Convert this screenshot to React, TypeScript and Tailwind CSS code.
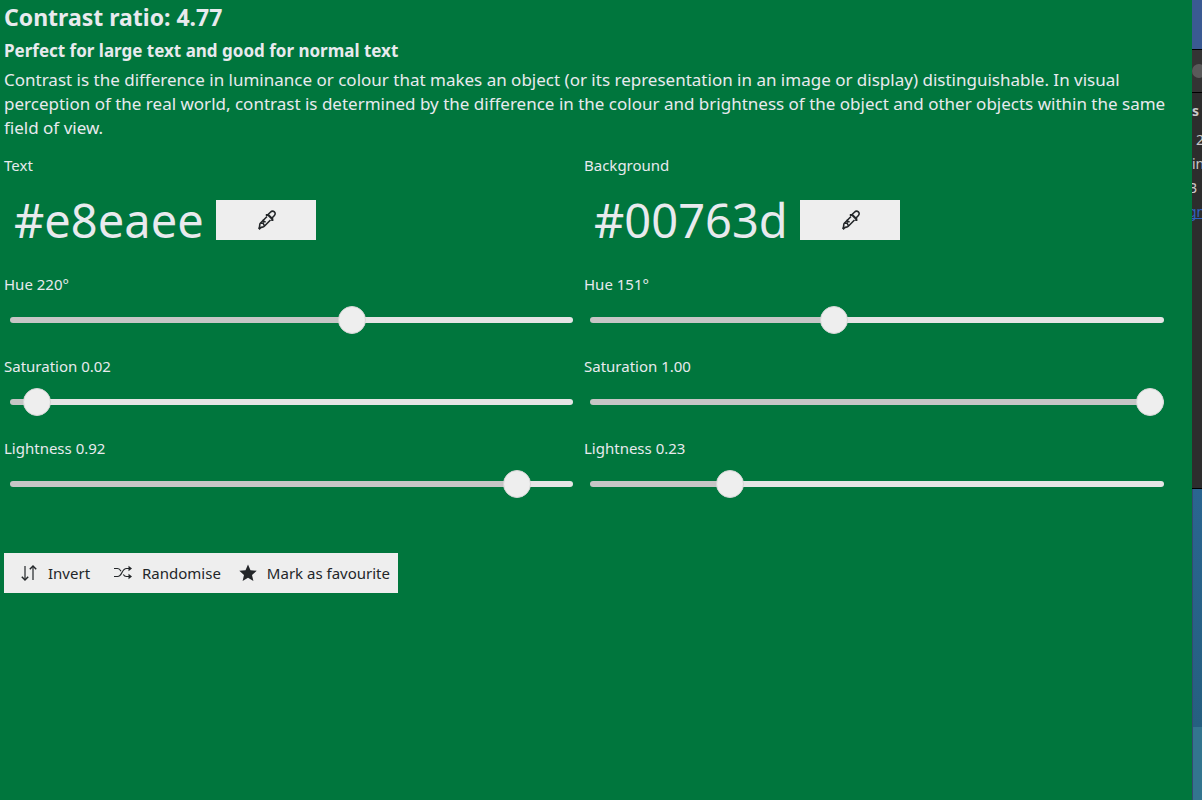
import { useState } from "react";
import type { CSSProperties, ReactNode } from "react";

function PickerIcon() {
  return (
    <svg width="22" height="22" viewBox="-1 0 22 22" fill="none" stroke="#232629" strokeWidth="1.6" aria-hidden="true">
      <path d="M11.800 5.800 14.400 3.200c1.200-1.200 2.900-1.300 4-.3s1 2.700-.2 3.900L15.500 9.500" />
      <path d="M9.800 6h2.500l4 4v2" strokeWidth="2.200" />
      <path d="M11 7.500 7.800 10.700M14.500 11 8.300 17.200c-1 1-2.300.8-3.300 1.300L3 20.400M7.800 10.700 4.300 14.200c-1 1-.3 2.500-.8 3.600L2.800 20" />
      <path d="M4.500 14.200h2.600l1.400 2.600M7.500 10.500v2.200h2.200" />
    </svg>
  );
}

function InvertIcon() {
  return (
    <svg width="18" height="18" viewBox="0 0 18 18" fill="none" stroke="#232629" aria-hidden="true">
      <path d="M5 2v14M13 2v14" strokeWidth="2" strokeOpacity=".6" />
      <path d="M1.800 12.800 5 16l3.200-3.200M9.800 5.200 13 2l3.200 3.200" strokeWidth="1.500" />
    </svg>
  );
}

function ShuffleIcon() {
  return (
    <svg width="18" height="18" viewBox="0 0 18 18" fill="none" stroke="#232629" strokeWidth="1.200" aria-hidden="true">
      <path d="M0 4.500h3.500c2 0 2.700 1.300 3.500 2.800M9.300 10.500c.8 1.300 1.500 2 3 2H16M0 12.500h3.500c5 0 4-8 9-8H16" />
      <path d="M14.500 1.700 18 4.500l-3.500 2.800zM14.500 9.700l3.500 2.800-3.500 2.800z" fill="#232629" stroke="none" />
    </svg>
  );
}

function StarIcon() {
  return (
    <svg width="18" height="18" viewBox="0 0 18 18" fill="#232629" aria-hidden="true">
      <path d="m9 .5 2.500 5.700 6.200.6-4.700 4.100 1.400 6.100L9 13.800 3.600 17 5 10.900.3 6.800l6.200-.6z" />
    </svg>
  );
}

type SliderProps = { id: string; label: string; max: number; initial: number; suffix?: string; digits: number };

function Slider({ id, label, max, initial, suffix = "", digits }: SliderProps) {
  const [value, setValue] = useState(initial);
  const ratio = value / max;
  const fill = { "--fill": `calc(14px + (100% - 28px) * ${ratio})` } as CSSProperties;
  return (
    <div className="flex h-[82px] flex-col">
      <label htmlFor={id} className="text-[15px] leading-6">
        {label} {value.toFixed(digits)}
        {suffix}
      </label>
      <div className="mt-2.5 flex pl-1.5">
        <input
          id={id}
          type="range"
          min={0}
          max={max}
          step="any"
          value={value}
          onChange={(e) => setValue(Number(e.target.value))}
          style={fill}
          className="h-7 w-full min-w-0 cursor-pointer appearance-none bg-transparent [&::-webkit-slider-runnable-track]:h-1.5 [&::-webkit-slider-runnable-track]:rounded-full [&::-webkit-slider-runnable-track]:bg-[linear-gradient(to_right,#c6c6c6_var(--fill),#e5e5e5_var(--fill))] [&::-webkit-slider-thumb]:-mt-[11px] [&::-webkit-slider-thumb]:size-7 [&::-webkit-slider-thumb]:appearance-none [&::-webkit-slider-thumb]:rounded-full [&::-webkit-slider-thumb]:border [&::-webkit-slider-thumb]:border-[#d6d6d6] [&::-webkit-slider-thumb]:bg-[#eeeeee]"
        />
      </div>
    </div>
  );
}

type ColumnProps = { id: string; title: string; color: string; hue: number; saturation: number; lightness: number };

function ColourColumn({ id, title, color, hue, saturation, lightness }: ColumnProps) {
  const [hex, setHex] = useState(color);
  return (
    <section className="min-w-0 first:pr-[11px]">
      <label htmlFor={`${id}-hex`} className="block text-[15px] leading-6">
        {title}
      </label>
      <div className="mt-[5px] mb-[15px] flex h-[75px] items-center">
        <input
          id={`${id}-hex`}
          type="text"
          value={hex}
          onChange={(e) => setHex(e.target.value)}
          className="field-sizing-content bg-transparent pr-3 pl-2.5 text-[47px] leading-[66px] outline-none"
        />
        <button
          type="button"
          aria-label={`Pick ${title.toLowerCase()} colour`}
          className="flex h-10 w-[100px] items-center justify-center bg-[#eeeeee]"
        >
          <PickerIcon />
        </button>
      </div>
      <Slider id={`${id}-hue`} label="Hue" max={360} initial={hue} suffix="°" digits={0} />
      <Slider id={`${id}-saturation`} label="Saturation" max={1} initial={saturation} digits={2} />
      <Slider id={`${id}-lightness`} label="Lightness" max={1} initial={lightness} digits={2} />
    </section>
  );
}

function ToolButton({ icon, children }: { icon: ReactNode; children: ReactNode }) {
  return (
    <button type="button" className="flex h-10 min-w-[92px] items-center gap-2.5 px-2 text-[15px] text-[#232629]">
      {icon}
      {children}
    </button>
  );
}

export default function App() {
  return (
    <div className="flex min-h-screen bg-[#00763d] font-['Noto_Sans',sans-serif] text-[#e8eaee]">
      <main className="min-w-0 flex-1 pr-4 pl-1">
        <h1 className="pt-px text-[23px] leading-8 font-bold">Contrast ratio: 4.77</h1>
        <h2 className="mt-1.5 text-[17px] leading-6 font-bold">Perfect for large text and good for normal text</h2>
        <p className="mt-[5px] text-[17px] leading-6">
          Contrast is the difference in luminance or colour that makes an object (or its representation in an image or
          display) distinguishable. In visual perception of the real world, contrast is determined by the difference in
          the colour and brightness of the object and other objects within the same field of view.
        </p>
        <div className="mt-[13px] grid grid-cols-2 pr-3">
          <ColourColumn id="text" title="Text" color="#e8eaee" hue={220.4} saturation={0.0234} lightness={0.922} />
          <ColourColumn id="background" title="Background" color="#00763d" hue={151.4} saturation={1} lightness={0.231} />
        </div>
        <div className="mt-[35px] flex w-fit gap-0.5 bg-[#eeeeee] pl-2">
          <ToolButton icon={<InvertIcon />}>Invert</ToolButton>
          <ToolButton icon={<ShuffleIcon />}>Randomise</ToolButton>
          <ToolButton icon={<StarIcon />}>Mark as favourite</ToolButton>
        </div>
      </main>
      <aside className="flex w-2.5 shrink-0 flex-col overflow-hidden bg-[#2d2d2d] text-[14px] leading-6 text-[#c8c8c8]">
        <div className="h-[50px] border-b border-black bg-[#3a5a92]" />
        <div className="flex h-[43px] items-center border-b border-black bg-[#343434]">
          <span className="size-3.5 shrink-0 rounded-full bg-[#5a5a5a]" />
        </div>
        <div className="h-[396px] border-b border-black pt-1.5">
          <p className="font-bold">s</p>
          <p className="mt-[5px] pl-1">2</p>
          <p>in</p>
          <p className="-ml-1">B</p>
          <a href="#sign" className="-ml-1 block text-[#2f62c0] underline [text-decoration-skip-ink:none]">
            gn
          </a>
        </div>
        <div className="h-[238px] border-l border-[#34496f] bg-linear-to-b from-[#2a6590] to-[#255f80]" />
        <div className="flex-1 border-l border-[#34496f] bg-[#33758f]" />
      </aside>
    </div>
  );
}
